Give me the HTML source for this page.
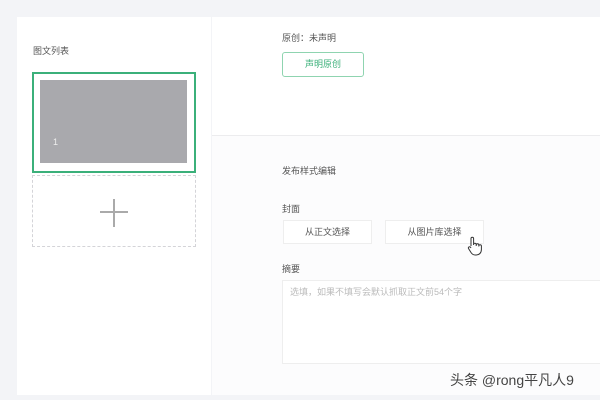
<!DOCTYPE html><html><head><meta charset="utf-8"><style>
body{margin:0;width:600px;height:400px;background:#f3f4f7;position:relative;overflow:hidden;font-family:"Liberation Sans","Noto Sans CJK SC",sans-serif;}
div{position:absolute;box-sizing:border-box}
.t{font-size:9px;color:#555;white-space:nowrap}
</style></head><body>
<div style="left:17px;top:17px;width:194px;height:378px;background:#fff"></div>
<div style="left:212px;top:17px;width:388px;height:118px;background:#fff"></div>
<div style="left:212px;top:135px;width:388px;height:1px;background:#ececee"></div>
<div style="left:212px;top:136px;width:388px;height:259px;background:#fcfcfd"></div>
<div class="t" style="left:33px;top:44px">图文列表</div>
<div style="left:32px;top:72px;width:164px;height:101px;border:2px solid #3bb07a;background:#fff"></div>
<div style="left:40px;top:80px;width:147px;height:83px;background:#a9a9ad"></div>
<div style="left:53px;top:137px;color:#eee;font-size:9px">1</div>
<div style="left:32px;top:175px;width:164px;height:72px;border:1px dashed #d4d4d8;background:#fff"></div>
<div style="left:100px;top:211px;width:28px;height:1.5px;background:#aaa"></div>
<div style="left:113px;top:199px;width:1.5px;height:28px;background:#aaa"></div>
<div class="t" style="left:282px;top:31px">原创：未声明</div>
<div style="left:282px;top:52px;width:82px;height:25px;border:1px solid #8fd4b0;border-radius:3px;color:#3bb07a;font-size:9px;text-align:center;line-height:23px">声明原创</div>
<div class="t" style="left:282px;top:164px">发布样式编辑</div>
<div class="t" style="left:282px;top:202px">封面</div>
<div style="left:283px;top:220px;width:89px;height:24px;background:#fff;border:1px solid #eee;font-size:9px;color:#555;text-align:center;line-height:22px">从正文选择</div>
<div style="left:385px;top:220px;width:99px;height:24px;background:#fff;border:1px solid #eee;font-size:9px;color:#555;text-align:center;line-height:22px">从图片库选择</div>
<svg style="position:absolute;left:467px;top:236px" width="16" height="20" viewBox="0 0 16 20"><path d="M4 10V2.5a1.3 1.3 0 0 1 2.6 0V9 M6.6 8.5a1.3 1.3 0 0 1 2.6 0V10 M9.2 9a1.3 1.3 0 0 1 2.6 0V10.5 M11.8 10a1.3 1.3 0 0 1 2.6 0v3.5c0 3-2 5.5-5 5.5H8c-2 0-3-1-4-2.5L1.5 12.5a1.2 1.2 0 0 1 2-1.3L4 12" fill="#fff" stroke="#333" stroke-width="1"/></svg>
<div class="t" style="left:282px;top:262px">摘要</div>
<div style="left:282px;top:280px;width:320px;height:84px;background:#fff;border:1px solid #eee"></div>
<div style="left:290px;top:285px;font-size:9px;color:#bbb;white-space:nowrap">选填，如果不填写会默认抓取正文前54个字</div>
<div style="left:450px;top:370px;font-size:14px;color:#444;white-space:nowrap;text-shadow:0 0 2px #fff">头条 @rong平凡人9</div>
</body></html>
